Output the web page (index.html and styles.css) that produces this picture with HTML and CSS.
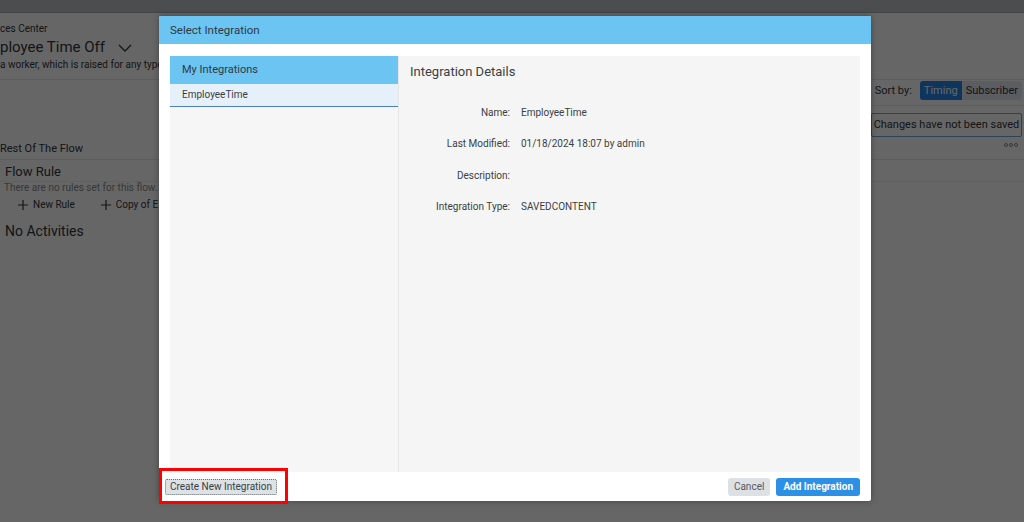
FILE: index.html
```html
<!DOCTYPE html>
<html lang="en">
<head>
<meta charset="UTF-8">
<title>Select Integration</title>
<link rel="stylesheet" href="styles.css">
</head>
<body>

<div class="page">
  <div class="shellbar"></div>
  <div class="page-head">
    <div class="crumb">ces Center</div>
    <div class="page-title">ployee Time Off
      <svg class="chev" width="14" height="8" viewBox="0 0 14 8"><polyline points="1,1 7,7 13,1" fill="none" stroke="#32363a" stroke-width="1.3"/></svg>
    </div>
    <div class="page-desc">a worker, which is raised for any type</div>
  </div>
  <div class="toolbar">
    <div class="sort-row">
      <span class="sort-label">&#8595;&nbsp; Sort by:</span>
      <div class="segmented">
        <span class="seg active">Timing</span>
        <span class="seg">Subscriber</span>
      </div>
    </div>
  </div>
  <div class="flow-head">
    <span class="flow-name">Rest Of The Flow</span>
    <div class="flow-side">
      <span class="unsaved">Changes have not been saved</span>
      <span class="dots"><i></i><i></i><i></i></span>
    </div>
  </div>
  <div class="rule-head">Flow Rule</div>
  <div class="rule-note">There are no rules set for this flow.</div>
  <div class="rule-actions">
    <span class="rule-link"><svg width="10" height="10" viewBox="0 0 10 10"><path d="M5 0V10M0 5H10" stroke="#32363a" stroke-width="1.2"/></svg>New Rule</span>
    <span class="rule-link"><svg width="10" height="10" viewBox="0 0 10 10"><path d="M5 0V10M0 5H10" stroke="#32363a" stroke-width="1.2"/></svg>Copy of E</span>
  </div>
  <div class="no-act">No Activities</div>
</div>

<div class="overlay"></div>

<div class="dialog">
  <div class="dialog-header">Select Integration</div>
  <div class="dialog-body">
    <div class="list-panel">
      <div class="list-head">My Integrations</div>
      <div class="list-item">EmployeeTime</div>
    </div>
    <div class="details-panel">
      <div class="details-title">Integration Details</div>
      <div class="detail-row"><span class="d-label">Name:</span><span class="d-value">EmployeeTime</span></div>
      <div class="detail-row"><span class="d-label">Last Modified:</span><span class="d-value">01/18/2024 18:07 by admin</span></div>
      <div class="detail-row"><span class="d-label">Description:</span><span class="d-value"></span></div>
      <div class="detail-row"><span class="d-label">Integration Type:</span><span class="d-value">SAVEDCONTENT</span></div>
    </div>
  </div>
  <div class="dialog-footer">
    <button class="btn-create">Create New Integration</button>
    <div class="footer-right">
      <button class="btn-cancel">Cancel</button>
      <button class="btn-add">Add Integration</button>
    </div>
  </div>
</div>

<div class="highlight"></div>

</body>
</html>
```

FILE: styles.css
```css
body {
  margin: 0;
  width: 1024px;
  height: 522px;
  overflow: hidden;
  font-family: Roboto, "Noto Sans", sans-serif;
  background: #fff;
  color: #32363a;
  position: relative;
}

/* page behind the dialog */
.page {
  height: 522px;
  background: #fff;
}

.shellbar {
  height: 12px;
  background: #bcc0c4;
  border-bottom: 1px solid #a9adb1;
}

.page-head {
  height: 56px;
  padding-top: 10px;
  border-bottom: 1px solid #e8e8e8;
}

.crumb {
  font-size: 10px;
  line-height: 12px;
  height: 12px;
}

.page-title {
  font-size: 15px;
  line-height: 24px;
  height: 24px;
}

.chev {
  margin-left: 9px;
  vertical-align: middle;
}

.page-desc {
  font-size: 10px;
  line-height: 12px;
  white-space: nowrap;
}

.page-head > div {
  width: max-content;
}

.toolbar {
  height: 26px;
  display: flex;
  justify-content: flex-end;
}

.sort-row {
  display: flex;
  align-items: flex-start;
  gap: 8px;
  font-size: 11px;
  white-space: nowrap;
  padding: 1px 2px 0 14px;
  border-bottom: 1px solid #e8e8e8;
}

.sort-label {
  line-height: 19px;
}

.segmented {
  display: flex;
  border-radius: 3px;
  overflow: hidden;
  height: 19px;
  line-height: 19px;
}

.seg {
  padding: 0 4px;
  background: #e3e9ef;
  font-size: 11px;
}

.seg.active {
  background: #2286e8;
  color: #fff;
}

.flow-head {
  height: 53px;
  display: flex;
  justify-content: space-between;
  border-bottom: 1px solid #e8e8e8;
  font-size: 11px;
}

.flow-name {
  align-self: flex-end;
  padding-bottom: 4px;
}

.flow-side {
  display: flex;
  flex-direction: column;
  align-items: flex-end;
  padding: 7px 2px 0 0;
}

.unsaved {
  border: 1px solid #6ea2e0;
  border-radius: 2px;
  width: 149px;
  height: 22px;
  line-height: 22px;
  text-align: center;
  white-space: nowrap;
}

.dots {
  display: flex;
  gap: 1px;
  margin-top: 6px;
  margin-right: 4px;
}

.dots i {
  width: 2px;
  height: 2px;
  border: 1px solid #8a8a8a;
  border-radius: 50%;
}

.rule-head {
  height: 21px;
  line-height: 23px;
  font-size: 13px;
  padding-left: 5px;
  border-bottom: 1px solid #efefef;
}

.rule-note {
  font-size: 10px;
  line-height: 12px;
  color: #8a8a8a;
  padding-left: 4px;
}

.rule-actions {
  display: flex;
  gap: 26px;
  padding-left: 18px;
  margin-top: 4px;
  font-size: 10px;
  line-height: 14px;
}

.rule-link {
  display: flex;
  align-items: center;
  gap: 5px;
}

.no-act {
  font-size: 14px;
  line-height: 18px;
  margin-top: 10px;
  padding-left: 5px;
}

.overlay {
  position: absolute;
  inset: 0;
  background: rgba(0, 0, 0, 0.6);
}

/* dialog */
.dialog {
  position: absolute;
  left: 159px;
  top: 16px;
  width: 712px;
  height: 485px;
  background: #fff;
  border-radius: 2px;
  box-shadow: 0 0 6px rgba(0, 0, 0, 0.35);
  display: flex;
  flex-direction: column;
  overflow: hidden;
}

.dialog-header {
  height: 28px;
  line-height: 28px;
  background: #6bc4f2;
  color: #2f3a44;
  font-size: 11.5px;
  padding-left: 11px;
}

.dialog-body {
  flex: 1;
  display: flex;
  margin: 12px 11px 0;
  background: #f5f5f5;
}

.list-panel {
  width: 228px;
  border-right: 1px solid #e6e6e6;
  background: #f6f6f6;
}

.list-head {
  height: 28px;
  line-height: 28px;
  background: #6bc4f2;
  color: #2f3a44;
  font-size: 11px;
  padding-left: 12px;
}

.list-item {
  height: 22px;
  line-height: 22px;
  background: #e6f0fa;
  border-bottom: 1px solid #4e7fb6;
  font-size: 10px;
  color: #3a3f44;
  padding-left: 12px;
}

.details-panel {
  flex: 1;
  padding: 8px 11px 0;
}

.details-title {
  font-size: 13px;
  color: #3a3f44;
  height: 23px;
  margin-bottom: 19px;
}

.detail-row {
  display: flex;
  gap: 11px;
  height: 31.4px;
  line-height: 14px;
  font-size: 10px;
  color: #3a3f44;
}

.d-label {
  width: 100px;
  text-align: right;
}

.dialog-footer {
  height: 29px;
  display: flex;
  align-items: center;
  justify-content: space-between;
  padding: 0 11px 0 6px;
}

.btn-create {
  font-family: inherit;
  font-size: 10px;
  color: #3a3f44;
  background: #dde2e7;
  border: 1px dotted #6a6f74;
  border-radius: 2px;
  padding: 1px 4px;
  height: 16px;
  line-height: 12px;
}

.footer-right {
  display: flex;
  gap: 6px;
}

.btn-cancel {
  font-family: inherit;
  font-size: 10px;
  color: #555a5f;
  background: #dde1e5;
  border: none;
  border-radius: 3px;
  height: 18px;
  padding: 0 6px;
}

.btn-add {
  font-family: inherit;
  font-size: 10px;
  font-weight: bold;
  color: #fff;
  background: #2b90e6;
  border: none;
  border-radius: 3px;
  height: 18px;
  padding: 0 7px;
}

.highlight {
  position: absolute;
  left: 159px;
  top: 468px;
  width: 123px;
  height: 30px;
  border: 3px solid #ff0000;
}
```
